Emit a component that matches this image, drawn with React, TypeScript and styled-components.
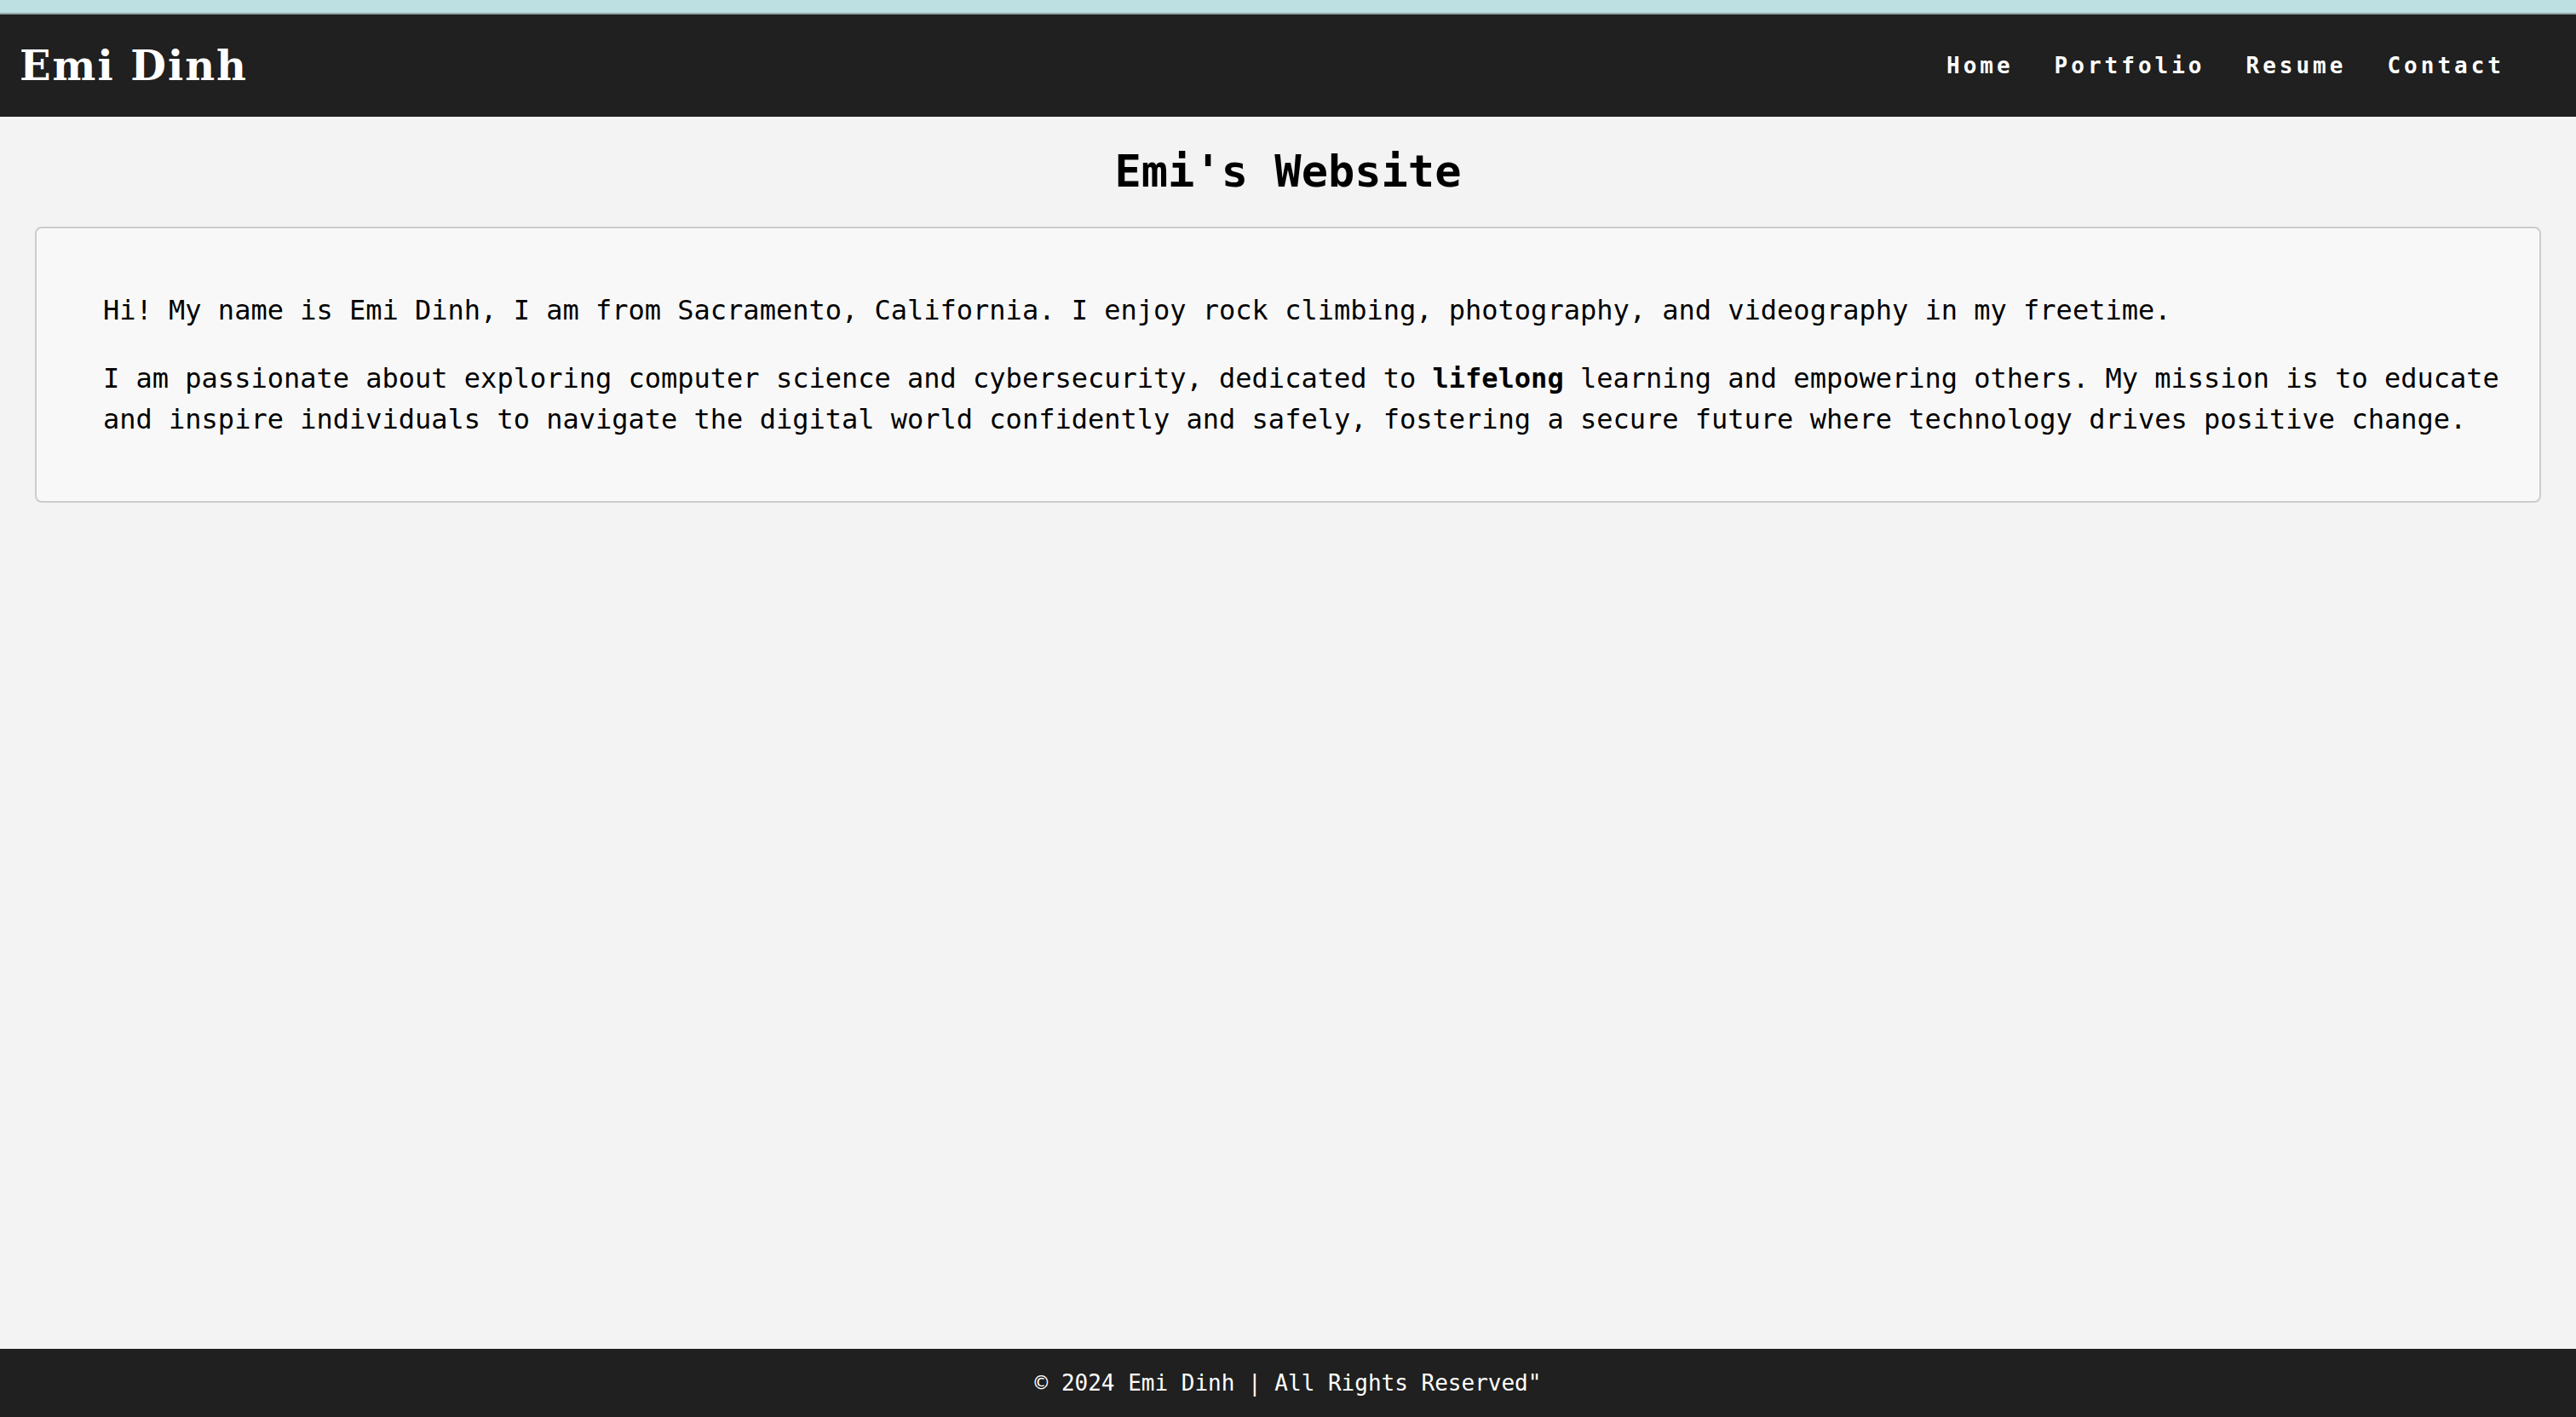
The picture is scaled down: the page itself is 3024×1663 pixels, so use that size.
import React from "react";
import styled, { createGlobalStyle } from "styled-components";

const GlobalStyle = createGlobalStyle`
  html, body {
    margin: 0;
    padding: 0;
  }
  body {
    background: #f3f3f3;
    font-family: "DejaVu Sans Mono", "Liberation Mono", monospace;
    color: #000;
  }
  * { box-sizing: border-box; }
`;

const Page = styled.div`
  min-height: 100vh;
  display: flex;
  flex-direction: column;
`;

const TopStrip = styled.div`
  height: 17px;
  background: #bde0e3;
  border-bottom: 2px solid #8ea7aa;
`;

const Header = styled.header`
  height: 120px;
  background: #1f201f;
  display: flex;
  align-items: center;
  justify-content: space-between;
  padding: 0 84px 0 23px;
`;

const Logo = styled.div`
  font-family: "DejaVu Serif", "Liberation Serif", serif;
  font-weight: 700;
  font-size: 48px;
  letter-spacing: 2px;
  color: #ffffff;
`;

const Nav = styled.nav`
  display: flex;
  align-items: center;
  gap: 48px;
`;

const NavLink = styled.a`
  font-family: "DejaVu Sans Mono", monospace;
  font-weight: 700;
  font-size: 26px;
  letter-spacing: 4px;
  color: #ffffff;
  text-decoration: none;
`;

const Main = styled.main`
  flex: 1;
  display: flex;
  flex-direction: column;
  padding: 0 41px;
`;

const Title = styled.h1`
  margin: 34px 0 35px;
  text-align: center;
  font-family: "DejaVu Sans Mono", monospace;
  font-size: 52px;
  font-weight: 700;
  line-height: normal;
`;

const Card = styled.section`
  background: #f8f8f8;
  border: 2px solid #cccccc;
  border-radius: 8px;
  padding: 40px 34px 40px 78px;
`;

const Paragraph = styled.p`
  margin: 32px 0;
  font-size: 32px;
  line-height: 48px;
`;

const Strong = styled.strong`
  font-weight: 700;
`;

const Footer = styled.footer`
  height: 80px;
  background: #1f201f;
  color: #ffffff;
  display: flex;
  align-items: center;
  justify-content: center;
  font-size: 26px;
`;

const links = ["Home", "Portfolio", "Resume", "Contact"];

export default function App() {
  return (
    <>
      <GlobalStyle />
      <Page>
        <TopStrip />
        <Header>
          <Logo>Emi Dinh</Logo>
          <Nav>
            {links.map((l) => (
              <NavLink key={l} href="#">
                {l}
              </NavLink>
            ))}
          </Nav>
        </Header>
        <Main>
          <Title>Emi's Website</Title>
          <Card>
            <Paragraph>
              Hi! My name is Emi Dinh, I am from Sacramento, California. I enjoy rock
              climbing, photography, and videography in my freetime.
            </Paragraph>
            <Paragraph>
              I am passionate about exploring computer science and cybersecurity,
              dedicated to <Strong>lifelong</Strong> learning and empowering others. My
              mission is to educate and inspire individuals to navigate the digital world
              confidently and safely, fostering a secure future where technology drives
              positive change.
            </Paragraph>
          </Card>
        </Main>
        <Footer>© 2024 Emi Dinh | All Rights Reserved"</Footer>
      </Page>
    </>
  );
}
